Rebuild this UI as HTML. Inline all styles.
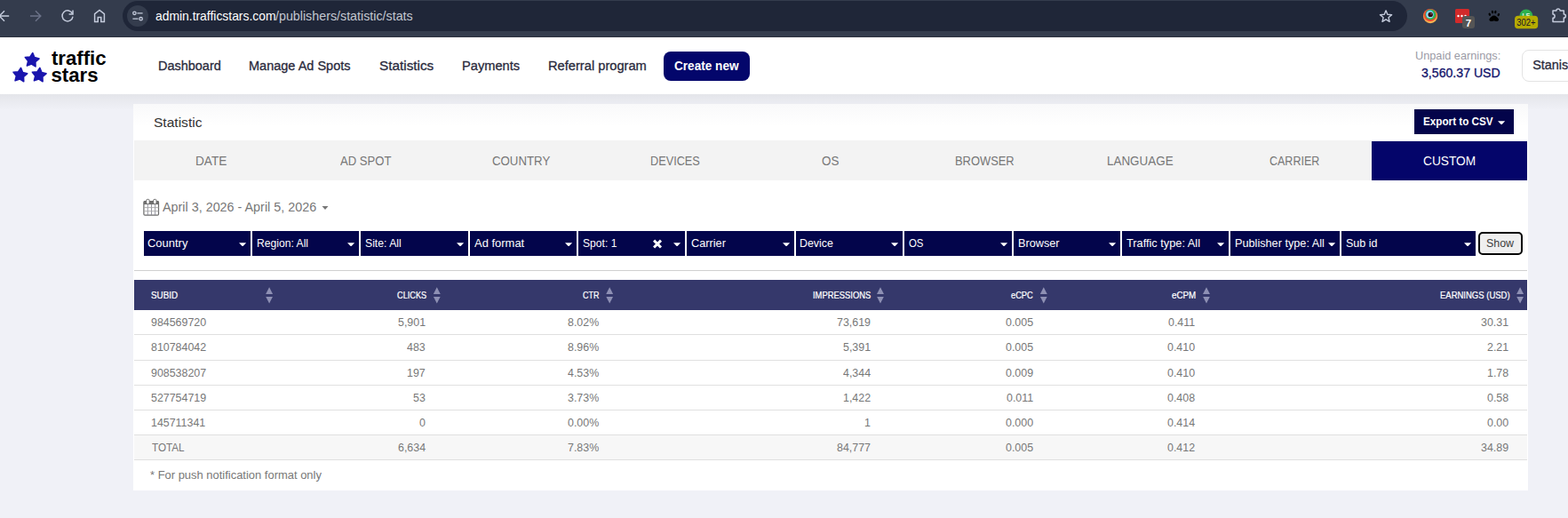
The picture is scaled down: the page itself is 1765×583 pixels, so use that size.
<!DOCTYPE html>
<html lang="en">
<head>
<meta charset="utf-8">
<title>Statistic - TrafficStars</title>
<style>
*{box-sizing:border-box;margin:0;padding:0}
html,body{width:1765px;height:583px;overflow:hidden}
body{background:#f0f1f7;font-family:"Liberation Sans","DejaVu Sans",sans-serif;position:relative;color:#777}
.abs{position:absolute}
svg{display:block}
.t{position:absolute;display:block;white-space:nowrap;line-height:20px;height:20px;transform-origin:0 50%;font-weight:normal;font-style:normal;text-decoration:none}
.t b{font-weight:normal;color:#fff}
#chrome{position:absolute;left:0;top:0;width:1765px;height:42px;background:#343c4d;border-bottom:1px solid #2d323f}
#pill{position:absolute;left:138px;top:1px;width:1446px;height:34px;border-radius:17px;background:#1f2638}
#siteinfo{position:absolute;left:143px;top:6px;width:24px;height:24px;border-radius:12px;background:#343c4d}
#header{position:absolute;left:0;top:42px;width:1765px;height:64px;background:#fff}
#hshadow{position:absolute;left:0;top:106px;width:1765px;height:18px;background:linear-gradient(#e4e5ea,#f0f1f7)}
#create{position:absolute;left:747px;top:58px;width:97px;height:33px;border-radius:8px;background:#03066b}
#userbtn{position:absolute;left:1713px;top:56px;width:80px;height:36px;border:1px solid #e3e3e3;border-radius:8px;background:#fff}
#panel{position:absolute;left:150px;top:117px;width:1570px;height:435px;background:#fff}
#phead{position:absolute;left:150px;top:117px;width:1570px;height:41px;background:linear-gradient(#f9f9fa,#fff 62%)}
#tabs{position:absolute;left:151px;top:158px;width:1568px;height:45px;background:#f3f3f3}
#tabon{position:absolute;left:1544px;top:159px;width:175px;height:44px;background:#04056a}
#export{position:absolute;left:1592px;top:123px;width:112px;height:28px;background:#03044a}
.car{position:absolute;width:8.2px;height:4.2px;background:#fff;clip-path:polygon(0 0,100% 0,50% 100%)}
.f{position:absolute;top:260px;height:28px;background:#03054b}
#show{position:absolute;left:1664px;top:261px;width:50px;height:26px;border:2px solid #050505;border-radius:5px;background:#efefef}
#hr{position:absolute;left:151px;top:304px;width:1568px;height:1px;background:#d0d0d0}
#thead{position:absolute;left:151px;top:315px;width:1568px;height:34px;background:#35386b}
.row{position:absolute;left:151px;width:1568px;height:1px;background:#e0e0e0}
.sort{position:absolute;top:323px;width:8px;height:19px}
.sort:before{content:"";position:absolute;left:0;top:0.3px;width:8.2px;height:8px;background:#8e90b4;clip-path:polygon(50% 0,100% 100%,0 100%)}
.sort:after{content:"";position:absolute;left:0;top:10.6px;width:8.2px;height:8px;background:#8e90b4;clip-path:polygon(0 0,100% 0,50% 100%)}
</style>
</head>
<body>
<div id="chrome" role="toolbar" aria-label="Browser toolbar">
  <div id="pill"></div>
  <div id="siteinfo"></div>
  <svg class="abs" style="left:0;top:0" width="1765" height="42" viewBox="0 0 1765 42">
    <g fill="none" stroke="#c4cbdc" stroke-width="1.5">
      <path d="M10.2 18H-1M5 12.2L-0.8 18L5 23.8"/>
      <path d="M34 18H45M40 12.2L45.8 18L40 23.8" stroke="#6b7288"/>
      <path d="M81.6 15.6A6 6 0 1 0 82 18.6"/>
      <path d="M82 11.6V16H77.6"/>
      <path d="M106.6 24.4V15.6L112 11.4L117.4 15.6V24.4H113.8V19.4H110.2V24.4Z"/>
      <circle cx="151.4" cy="14.8" r="1.7" stroke-width="1.3"/>
      <path d="M154.4 14.8H160.6M149.4 21.2H155.6" stroke-width="1.3"/>
      <circle cx="158.6" cy="21.2" r="1.7" stroke-width="1.3"/>
      <path d="M1560.05 11.85L1561.84 16.28L1566.61 16.62L1562.95 19.69L1564.11 24.33L1560.05 21.80L1555.99 24.33L1557.15 19.69L1553.49 16.62L1558.26 16.28Z" stroke-width="1.4" stroke-linejoin="round"/>
      <path d="M1748 12h3.9a2.1 2.1 0 0 1 4.2 0h4.2v3.9a2.1 2.1 0 0 1 0 4.200v4.300h-12.300v-4.100a2.100 2.100 0 0 0 0-4.200z" stroke-width="1.5" stroke-linejoin="round"/>
    </g>
    <defs><linearGradient id="g1" x1="0" y1="0" x2="0.3" y2="1"><stop offset="0" stop-color="#ee4a35"/><stop offset="0.55" stop-color="#f2853e"/><stop offset="1" stop-color="#f7b552"/></linearGradient></defs>
    <circle cx="1610.05" cy="18.05" r="8.15" fill="url(#g1)"/>
    <circle cx="1610" cy="17.1" r="6.9" fill="#e9442f"/>
    <circle cx="1610.4" cy="16.4" r="5.9" fill="#35b24a"/>
    <circle cx="1609.5" cy="16.1" r="4.5" fill="#35b9e8"/>
    <circle cx="1609.5" cy="16.4" r="3.9" fill="#9bdcf3"/>
    <circle cx="1610.2" cy="16.4" r="2.7" fill="#330a08"/>
    <circle cx="1611" cy="15.6" r="0.6" fill="#d9b8b0"/>
    <rect x="1638" y="10" width="16" height="16" rx="1.5" fill="#d32a2a"/>
    <circle cx="1641.5" cy="18" r="1.2" fill="#fff"/><circle cx="1645.5" cy="18" r="1.2" fill="#fff"/><circle cx="1649.5" cy="18" r="1.2" fill="#fff"/>
    <rect x="1646" y="18" width="14" height="14" rx="3" fill="#555"/>
    <text x="1653" y="29.6" font-family="Liberation Sans, sans-serif" font-size="11.5" font-weight="bold" fill="#fff" text-anchor="middle">7</text>
    <g fill="#000">
      <path d="M1681.7 17.6c2 0 3.2 1.6 4.4 2.6c1.5 1.3 1.2 3.6-1 3.8c-1.3 .2-2.1-.5-3.4-.5s-2.100 .7-3.400 .5c-2.200-.2-2.500-2.500-1-3.800c1.200-1 2.400-2.600 4.400-2.600z"/>
      <ellipse cx="1676.8" cy="16.2" rx="1.15" ry="1.7" transform="rotate(-25 1676.8 16.2)"/>
      <ellipse cx="1680" cy="13.5" rx="1.15" ry="1.8" transform="rotate(-8 1680 13.5)"/>
      <ellipse cx="1683.3" cy="13.5" rx="1.15" ry="1.8" transform="rotate(8 1683.3 13.5)"/>
      <ellipse cx="1686.8" cy="16.6" rx="1.15" ry="1.7" transform="rotate(25 1686.8 16.6)"/>
    </g>
    <circle cx="1717.9" cy="18" r="7.5" fill="#2fb14f"/>
    <text x="1713.6" y="19.6" font-family="Liberation Sans, sans-serif" font-size="8" font-weight="bold" fill="#eef8ee" textLength="8.6" lengthAdjust="spacingAndGlyphs">LE</text>
    <rect x="1705" y="17.7" width="26.2" height="14.5" rx="3.8" fill="#b5ab00"/>
    <text x="1707.2" y="29.1" font-family="Liberation Sans, sans-serif" font-size="10.8" fill="#15152a" textLength="21.2" lengthAdjust="spacingAndGlyphs">302+</text>
  </svg>
  <div class="t" style="left:174.94px;top:8.00px;font-size:13.90px;color:#fff;">admin.trafficstars.com</div><div class="t" style="left:310.40px;top:8.00px;font-size:13.90px;color:#c3c7d0;transform:scaleX(1.0276);">/publishers/statistic/stats</div>
</div>
<div id="hshadow"></div>
<header>
<div id="header"></div>
<a class="logo" aria-label="traffic stars">
<svg class="abs" style="left:10px;top:54px" width="48" height="42" viewBox="10 54 48 42">
  <g fill="#1a15ad" stroke="#1a15ad" stroke-width="1.6" stroke-linejoin="round">
    <path d="M36.76 59.60L38.78 64.60L43.97 66.08L39.83 69.55L40.02 74.94L35.45 72.08L30.38 73.93L31.69 68.69L28.36 64.44L33.75 64.08Z"/>
    <path d="M23.46 76.40L25.48 81.40L30.67 82.88L26.53 86.35L26.73 91.74L22.15 88.88L17.08 90.73L18.39 85.49L15.06 81.24L20.45 80.88Z"/>
    <path d="M44.81 76.40L46.83 81.40L52.02 82.88L47.88 86.35L48.08 91.74L43.50 88.88L38.43 90.73L39.74 85.49L36.41 81.24L41.80 80.88Z"/>
  </g>
</svg>
<span class="t" style="left:58.08px;top:56.00px;font-size:22.20px;color:#000;font-weight:bold;transform:scaleX(0.9971);">traffic</span>
<span class="t" style="left:57.52px;top:75.00px;font-size:22.20px;color:#000;font-weight:bold;">stars</span>
</a>
<nav>
<a class="t" style="left:178.24px;top:64.00px;font-size:14.83px;color:#2a2a3c;transform:scaleX(0.9754);-webkit-text-stroke:0.3px #2a2a3c">Dashboard</a>
<a class="t" style="left:280.44px;top:64.00px;font-size:14.83px;color:#2a2a3c;transform:scaleX(0.9780);-webkit-text-stroke:0.3px #2a2a3c">Manage Ad Spots</a>
<a class="t" style="left:427.31px;top:64.00px;font-size:14.83px;color:#2a2a3c;transform:scaleX(1.0322);-webkit-text-stroke:0.3px #2a2a3c">Statistics</a>
<a class="t" style="left:520.03px;top:64.00px;font-size:14.83px;color:#2a2a3c;transform:scaleX(0.9873);-webkit-text-stroke:0.3px #2a2a3c">Payments</a>
<a class="t" style="left:616.53px;top:64.00px;font-size:14.83px;color:#2a2a3c;transform:scaleX(0.9888);-webkit-text-stroke:0.3px #2a2a3c">Referral program</a>
<div id="create"></div>
<a class="t" style="left:759.06px;top:64.00px;font-size:14.83px;color:#fff;font-weight:bold;transform:scaleX(0.9167);">Create new</a>
</nav>
<div class="account">
<div class="t" style="left:1593.25px;top:53.00px;font-size:12.94px;color:#9b9ba6;transform:scaleX(0.9833);">Unpaid earnings:</div>
<div class="t" style="left:1600.21px;top:72.00px;font-size:14.10px;color:#12126a;transform:scaleX(1.0022);-webkit-text-stroke:0.3px #12126a">3,560.37 USD</div>
<div id="userbtn"></div>
<div class="t" style="left:1725.25px;top:63.00px;font-size:14.39px;color:#2a2a3c;-webkit-text-stroke:0.3px #2a2a3c">Stanis</div>
</div>
</header>
<main>
<section>
<div id="panel"></div>
<div id="phead"></div>
<h3 class="t" style="left:172.50px;top:128.00px;font-size:15.26px;color:#333;transform:scaleX(1.0198);">Statistic</h3>
<div id="export"></div>
<div class="t" style="left:1601.94px;top:127.00px;font-size:12.79px;color:#fff;font-weight:bold;transform:scaleX(0.9151);">Export to CSV</div>
<div class="car" style="left:1686px;top:136.2px"></div>
<div role="tablist">
<div id="tabs"></div>
<div id="tabon"></div>
<a class="t" role="tab" style="left:219.61px;top:171.00px;font-size:15.55px;color:#777;transform:scaleX(0.8770);">DATE</a>
<a class="t" role="tab" style="left:383.20px;top:171.00px;font-size:15.55px;color:#777;transform:scaleX(0.8419);">AD SPOT</a>
<a class="t" role="tab" style="left:553.54px;top:171.00px;font-size:15.55px;color:#777;transform:scaleX(0.8517);">COUNTRY</a>
<a class="t" role="tab" style="left:732.08px;top:171.00px;font-size:15.55px;color:#777;transform:scaleX(0.8180);">DEVICES</a>
<a class="t" role="tab" style="left:924.80px;top:171.00px;font-size:15.55px;color:#777;transform:scaleX(0.8618);">OS</a>
<a class="t" role="tab" style="left:1075.47px;top:171.00px;font-size:15.55px;color:#777;transform:scaleX(0.8297);">BROWSER</a>
<a class="t" role="tab" style="left:1245.63px;top:171.00px;font-size:15.55px;color:#777;transform:scaleX(0.8636);">LANGUAGE</a>
<a class="t" role="tab" style="left:1429.38px;top:171.00px;font-size:15.55px;color:#777;transform:scaleX(0.8037);">CARRIER</a>
<a class="t" role="tab" style="left:1601.91px;top:171.00px;font-size:15.55px;color:#fff;transform:scaleX(0.8815);">CUSTOM</a>
</div>
<div class="daterange">
<svg class="abs" style="left:160px;top:222px" width="21" height="23" viewBox="160 222 21 23"><rect x="161.9" y="226.6" width="16.6" height="15.6" rx="1.2" fill="#fff" stroke="#6b6b6b" stroke-width="1.2"/><rect x="161.9" y="226.2" width="16.6" height="3.9" fill="#6f6f6f"/><path d="M166.3 230v12M170.5 230v12M174.6 230v12" stroke="#8c8c99" stroke-width="0.9" fill="none"/><path d="M162 233.6h16.4M162 237.7h16.4" stroke="#a8a8a8" stroke-width="0.9" fill="none"/><rect x="164.7" y="224.3" width="3.5" height="5.4" rx="1.6" fill="#fff" stroke="#6b6b6b" stroke-width="1"/><rect x="172.6" y="224.3" width="3.5" height="5.4" rx="1.6" fill="#fff" stroke="#6b6b6b" stroke-width="1"/></svg>
<div class="t" style="left:183.00px;top:223.00px;font-size:14.83px;color:#777;transform:scaleX(0.9679);">April 3, 2026 - April 5, 2026</div>
<div class="car" style="left:362.3px;top:231.7px;width:7.4px;height:4.2px;background:#777"></div>
</div>
<div class="filters">
<div class="f" style="left:162px;width:120px"></div>
<div class="t" style="left:166.15px;top:264.00px;font-size:13.23px;color:#fff;transform:scaleX(0.9813);">Country</div>
<div class="car" style="left:269px;top:273.2px"></div>
<div class="f" style="left:284px;width:120px"></div>
<div class="t" style="left:288.63px;top:264.00px;font-size:13.23px;color:#fff;transform:scaleX(0.9181);">Region: All</div>
<div class="car" style="left:391px;top:273.2px"></div>
<div class="f" style="left:406px;width:121px"></div>
<div class="t" style="left:411.05px;top:264.00px;font-size:13.23px;color:#fff;transform:scaleX(0.9235);">Site: All</div>
<div class="car" style="left:514px;top:273.2px"></div>
<div class="f" style="left:529px;width:120px"></div>
<div class="t" style="left:534.00px;top:264.00px;font-size:13.23px;color:#fff;transform:scaleX(0.9808);">Ad format</div>
<div class="car" style="left:636px;top:273.2px"></div>
<div class="f" style="left:651px;width:120px"></div>
<div class="t" style="left:655.55px;top:264.00px;font-size:13.23px;color:#fff;transform:scaleX(0.9163);">Spot: 1</div>
<svg class="abs" style="left:734px;top:269px" width="12" height="11" viewBox="0 0 12 11"><path d="M2.1 1.6L10 9.5M10 1.600L2.1 9.5" stroke="#fff" stroke-width="3" fill="none"/></svg>
<div class="car" style="left:758px;top:273.2px"></div>
<div class="f" style="left:773px;width:121px"></div>
<div class="t" style="left:778.36px;top:264.00px;font-size:13.23px;color:#fff;transform:scaleX(0.9625);">Carrier</div>
<div class="car" style="left:881px;top:273.2px"></div>
<div class="f" style="left:896px;width:120px"></div>
<div class="t" style="left:900.41px;top:264.00px;font-size:13.23px;color:#fff;transform:scaleX(0.9375);">Device</div>
<div class="car" style="left:1003px;top:273.2px"></div>
<div class="f" style="left:1018px;width:121px"></div>
<div class="t" style="left:1022.99px;top:264.00px;font-size:13.23px;color:#fff;transform:scaleX(0.8630);">OS</div>
<div class="car" style="left:1126px;top:273.2px"></div>
<div class="f" style="left:1141px;width:120px"></div>
<div class="t" style="left:1145.58px;top:264.00px;font-size:13.23px;color:#fff;transform:scaleX(0.9603);">Browser</div>
<div class="car" style="left:1248px;top:273.2px"></div>
<div class="f" style="left:1263px;width:120px"></div>
<div class="t" style="left:1267.74px;top:264.00px;font-size:13.23px;color:#fff;transform:scaleX(0.9656);">Traffic type: All</div>
<div class="car" style="left:1370px;top:273.2px"></div>
<div class="f" style="left:1385px;width:123px"></div>
<div class="t" style="left:1389.68px;top:264.00px;font-size:13.23px;color:#fff;transform:scaleX(0.9598);">Publisher type: All</div>
<div class="car" style="left:1495px;top:273.2px"></div>
<div class="f" style="left:1510px;width:151px"></div>
<div class="t" style="left:1514.74px;top:264.00px;font-size:13.23px;color:#fff;transform:scaleX(0.9474);">Sub id</div>
<div class="car" style="left:1648px;top:273.2px"></div>
<div id="show"></div>
<div class="t" style="left:1673.24px;top:264.00px;font-size:13.23px;color:#3c3c3c;transform:scaleX(0.9376);">Show</div>
</div>
<div id="hr"></div>
<div role="table">
<div role="row">
<div id="thead"></div>
<div class="t" role="columnheader" style="left:170.16px;top:323.00px;font-size:10.39px;color:#fff;transform:scaleX(0.9480);-webkit-text-stroke:0.22px #fff">SUBID</div>
<div class="sort" style="left:299.0px"></div>
<div class="t" role="columnheader" style="left:447.14px;top:323.00px;font-size:10.39px;color:#fff;transform:scaleX(0.8856);-webkit-text-stroke:0.22px #fff">CLICKS</div>
<div class="sort" style="left:487.7px"></div>
<div class="t" role="columnheader" style="left:656.25px;top:323.00px;font-size:10.39px;color:#fff;transform:scaleX(0.8676);-webkit-text-stroke:0.22px #fff">CTR</div>
<div class="sort" style="left:682.1px"></div>
<div class="t" role="columnheader" style="left:914.55px;top:323.00px;font-size:10.39px;color:#fff;transform:scaleX(0.9052);-webkit-text-stroke:0.22px #fff">IMPRESSIONS</div>
<div class="sort" style="left:986.9px"></div>
<div class="t" role="columnheader" style="left:1138.43px;top:323.00px;font-size:10.39px;color:#fff;transform:scaleX(0.8953);-webkit-text-stroke:0.22px #fff">eCPC</div>
<div class="sort" style="left:1170.7px"></div>
<div class="t" role="columnheader" style="left:1319.11px;top:323.00px;font-size:10.39px;color:#fff;transform:scaleX(0.9404);-webkit-text-stroke:0.22px #fff">eCPM</div>
<div class="sort" style="left:1353.9px"></div>
<div class="t" role="columnheader" style="left:1620.84px;top:323.00px;font-size:10.39px;color:#fff;transform:scaleX(0.9149);-webkit-text-stroke:0.22px #fff">EARNINGS (USD)</div>
<div class="sort" style="left:1707.0px"></div>
</div>
<div class="abs" style="left:151px;top:490px;width:1568px;height:27px;background:#f7f7f7"></div>
<div class="row" style="top:376px"></div>
<div class="row" style="top:405px"></div>
<div class="row" style="top:433px"></div>
<div class="row" style="top:461px"></div>
<div class="row" style="top:489px"></div>
<div class="row" style="top:517px"></div>
<div role="row">
<div class="t" role="cell" style="left:170.24px;top:353.00px;font-size:13.00px;color:#777;transform:scaleX(0.9550);">984569720</div>
<div class="t" role="cell" style="left:447.91px;top:353.00px;font-size:13.00px;color:#777;transform:scaleX(0.9550);">5,901</div>
<div class="t" role="cell" style="left:639.32px;top:353.00px;font-size:13.00px;color:#777;transform:scaleX(0.9550);">8.02%</div>
<div class="t" role="cell" style="left:941.80px;top:353.00px;font-size:13.00px;color:#777;transform:scaleX(0.9550);">73,619</div>
<div class="t" role="cell" style="left:1131.64px;top:353.00px;font-size:13.00px;color:#777;transform:scaleX(0.9550);">0.005</div>
<div class="t" role="cell" style="left:1315.13px;top:353.00px;font-size:13.00px;color:#777;transform:scaleX(0.9550);">0.411</div>
<div class="t" role="cell" style="left:1666.91px;top:353.00px;font-size:13.00px;color:#777;transform:scaleX(0.9550);">30.31</div>
</div>
<div role="row">
<div class="t" role="cell" style="left:170.24px;top:381.00px;font-size:13.00px;color:#777;transform:scaleX(0.9550);">810784042</div>
<div class="t" role="cell" style="left:458.26px;top:381.00px;font-size:13.00px;color:#777;transform:scaleX(0.9550);">483</div>
<div class="t" role="cell" style="left:639.32px;top:381.00px;font-size:13.00px;color:#777;transform:scaleX(0.9550);">8.96%</div>
<div class="t" role="cell" style="left:948.71px;top:381.00px;font-size:13.00px;color:#777;transform:scaleX(0.9550);">5,391</div>
<div class="t" role="cell" style="left:1131.64px;top:381.00px;font-size:13.00px;color:#777;transform:scaleX(0.9550);">0.005</div>
<div class="t" role="cell" style="left:1314.21px;top:381.00px;font-size:13.00px;color:#777;transform:scaleX(0.9550);">0.410</div>
<div class="t" role="cell" style="left:1673.81px;top:381.00px;font-size:13.00px;color:#777;transform:scaleX(0.9550);">2.21</div>
</div>
<div role="row">
<div class="t" role="cell" style="left:170.24px;top:410.00px;font-size:13.00px;color:#777;transform:scaleX(0.9550);">908538207</div>
<div class="t" role="cell" style="left:458.26px;top:410.00px;font-size:13.00px;color:#777;transform:scaleX(0.9550);">197</div>
<div class="t" role="cell" style="left:639.32px;top:410.00px;font-size:13.00px;color:#777;transform:scaleX(0.9550);">4.53%</div>
<div class="t" role="cell" style="left:948.71px;top:410.00px;font-size:13.00px;color:#777;transform:scaleX(0.9550);">4,344</div>
<div class="t" role="cell" style="left:1131.64px;top:410.00px;font-size:13.00px;color:#777;transform:scaleX(0.9550);">0.009</div>
<div class="t" role="cell" style="left:1314.21px;top:410.00px;font-size:13.00px;color:#777;transform:scaleX(0.9550);">0.410</div>
<div class="t" role="cell" style="left:1673.81px;top:410.00px;font-size:13.00px;color:#777;transform:scaleX(0.9550);">1.78</div>
</div>
<div role="row">
<div class="t" role="cell" style="left:170.24px;top:438.00px;font-size:13.00px;color:#777;transform:scaleX(0.9550);">527754719</div>
<div class="t" role="cell" style="left:465.16px;top:438.00px;font-size:13.00px;color:#777;transform:scaleX(0.9550);">53</div>
<div class="t" role="cell" style="left:639.32px;top:438.00px;font-size:13.00px;color:#777;transform:scaleX(0.9550);">3.73%</div>
<div class="t" role="cell" style="left:948.71px;top:438.00px;font-size:13.00px;color:#777;transform:scaleX(0.9550);">1,422</div>
<div class="t" role="cell" style="left:1132.56px;top:438.00px;font-size:13.00px;color:#777;transform:scaleX(0.9550);">0.011</div>
<div class="t" role="cell" style="left:1314.21px;top:438.00px;font-size:13.00px;color:#777;transform:scaleX(0.9550);">0.408</div>
<div class="t" role="cell" style="left:1673.81px;top:438.00px;font-size:13.00px;color:#777;transform:scaleX(0.9550);">0.58</div>
</div>
<div role="row">
<div class="t" role="cell" style="left:170.24px;top:466.00px;font-size:13.00px;color:#777;transform:scaleX(0.9550);">145711341</div>
<div class="t" role="cell" style="left:472.07px;top:466.00px;font-size:13.00px;color:#777;transform:scaleX(0.9550);">0</div>
<div class="t" role="cell" style="left:639.32px;top:466.00px;font-size:13.00px;color:#777;transform:scaleX(0.9550);">0.00%</div>
<div class="t" role="cell" style="left:972.87px;top:466.00px;font-size:13.00px;color:#777;transform:scaleX(0.9550);">1</div>
<div class="t" role="cell" style="left:1131.64px;top:466.00px;font-size:13.00px;color:#777;transform:scaleX(0.9550);">0.000</div>
<div class="t" role="cell" style="left:1314.21px;top:466.00px;font-size:13.00px;color:#777;transform:scaleX(0.9550);">0.414</div>
<div class="t" role="cell" style="left:1673.81px;top:466.00px;font-size:13.00px;color:#777;transform:scaleX(0.9550);">0.00</div>
</div>
<div role="row">
<div class="t" role="cell" style="left:170.67px;top:494.00px;font-size:13.37px;color:#777;transform:scaleX(0.8719);">TOTAL</div>
<div class="t" role="cell" style="left:447.91px;top:494.00px;font-size:13.00px;color:#777;transform:scaleX(0.9550);">6,634</div>
<div class="t" role="cell" style="left:639.32px;top:494.00px;font-size:13.00px;color:#777;transform:scaleX(0.9550);">7.83%</div>
<div class="t" role="cell" style="left:941.80px;top:494.00px;font-size:13.00px;color:#777;transform:scaleX(0.9550);">84,777</div>
<div class="t" role="cell" style="left:1131.64px;top:494.00px;font-size:13.00px;color:#777;transform:scaleX(0.9550);">0.005</div>
<div class="t" role="cell" style="left:1314.21px;top:494.00px;font-size:13.00px;color:#777;transform:scaleX(0.9550);">0.412</div>
<div class="t" role="cell" style="left:1666.91px;top:494.00px;font-size:13.00px;color:#777;transform:scaleX(0.9550);">34.89</div>
</div>
</div>
<div class="t" style="left:168.81px;top:525.00px;font-size:13.66px;color:#777;transform:scaleX(0.9483);">* For push notification format only</div>
</section>
</main>
</body>
</html>
